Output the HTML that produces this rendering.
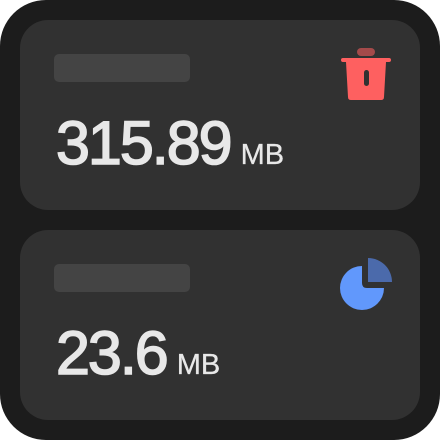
<!DOCTYPE html>
<html><head><style>
html,body{margin:0;padding:0;background:#fff;}
.o{position:absolute;left:0;top:0;width:440px;height:440px;background:#1c1c1c;border-radius:46px;}
.c{position:absolute;left:20px;width:400px;height:190px;background:#313131;border-radius:28px;}
.b{position:absolute;left:34px;top:34px;width:136px;height:28px;background:#444;border-radius:5px;}
.n{position:absolute;left:36px;font-family:"Liberation Sans",sans-serif;color:#e8e8e8;white-space:nowrap;line-height:1;}
.n b{font-weight:normal;font-size:61px;letter-spacing:-2px;-webkit-text-stroke:1.6px #e8e8e8;}
.n span{font-size:29px;margin-left:10px;-webkit-text-stroke:0.3px #e8e8e8;}
svg{position:absolute;}
</style></head><body>
<div class="o"></div>
<div class="c" style="top:20px"><div class="b"></div>
<div class="n" style="top:93px"><b>315.89</b><span>MB</span></div>
<svg style="left:0;top:0" width="400" height="190" viewBox="20 20 400 190">
<rect x="357" y="48" width="18" height="8" rx="4" fill="#a44a4a"/>
<path d="M343 58 H389 Q391 58 391 60 Q391 62 389 62 H386 L384 97 Q384 100 381 100 H351 Q348 100 348 97 L346 62 H343 Q341 62 341 60 Q341 58 343 58Z" fill="#fe6060"/>
<rect x="364" y="70" width="5" height="16" rx="2.5" fill="#313131"/>
</svg>
</div>
<div class="c" style="top:230px"><div class="b"></div>
<div class="n" style="top:93px"><b>23.6</b><span>MB</span></div>
<svg style="left:0;top:0" width="400" height="190" viewBox="20 230 400 190">
<path d="M362 266 A22 22 0 1 0 384 288 L367 288 Q362 288 362 283Z" fill="#6198fc"/>
<path d="M368 258 A24 24 0 0 1 392 282 L368 282Z" fill="#4b6aab"/>
</svg>
</div>
</body></html>
